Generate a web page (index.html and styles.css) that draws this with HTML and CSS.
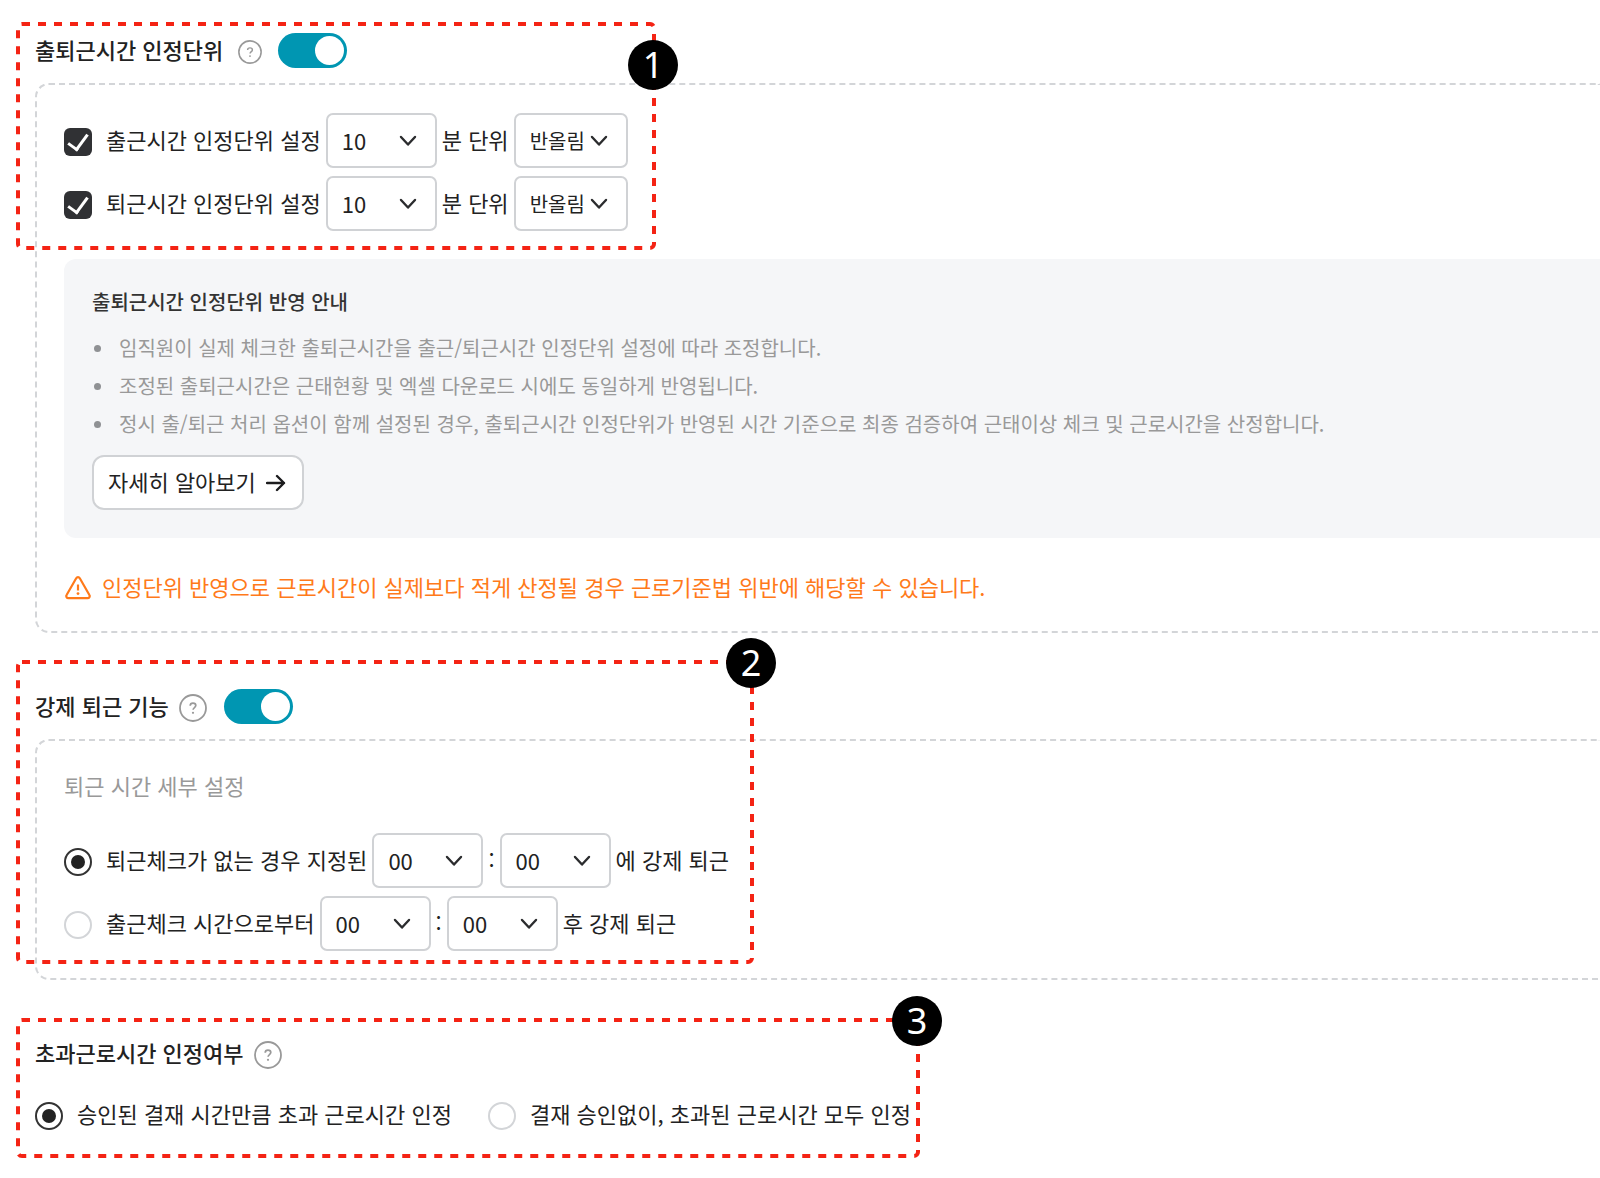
FILE: index.html
```html
<!DOCTYPE html>
<html lang="ko">
<head>
    <meta charset="UTF-8">
    <meta name="viewport" content="width=device-width, initial-scale=1.0">
    <title>근태 설정</title>
    <link rel="stylesheet" href="styles.css">
</head>
<body>
    <svg class="symbols" aria-hidden="true">
        <symbol id="chevron" viewBox="0 0 18 12">
            <path d="M2 2l7 7.5L16 2" fill="none" stroke="#2b2c2e" stroke-width="2.4" stroke-linecap="round" stroke-linejoin="round"/>
        </symbol>
        <symbol id="help" viewBox="0 0 28 28">
            <circle cx="14" cy="14" r="13" fill="none" stroke="#999" stroke-width="1.8"/>
            <path d="M11.2 11.7c0-1.6 1.2-2.5 2.8-2.5s2.8 1 2.8 2.4c0 2-2.7 2-2.7 4.2" fill="none" stroke="#999" stroke-width="1.7"/>
            <circle cx="14" cy="18.8" r="1.1" fill="#999"/>
        </symbol>
    </svg>

    <form>
        <section class="section">
            <div class="section-header">
                <h2>출퇴근시간 인정단위</h2>
                <button type="button" class="help help-small" aria-label="도움말"><svg><use href="#help"/></svg></button>
                <input type="checkbox" class="toggle" aria-label="출퇴근시간 인정단위" checked>
            </div>
            <div class="panel">
                <div class="rows">
                    <div class="row">
                        <input type="checkbox" class="check" id="inUnit" checked>
                        <label for="inUnit">출근시간 인정단위 설정</label>
                        <span class="select">
                            <select aria-label="출근 분"><option>10</option></select>
                            <svg><use href="#chevron"/></svg>
                        </span>
                        <span class="unit">분 단위</span>
                        <span class="select select-text">
                            <select aria-label="출근 처리"><option>반올림</option></select>
                            <svg><use href="#chevron"/></svg>
                        </span>
                    </div>
                    <div class="row">
                        <input type="checkbox" class="check" id="outUnit" checked>
                        <label for="outUnit">퇴근시간 인정단위 설정</label>
                        <span class="select">
                            <select aria-label="퇴근 분"><option>10</option></select>
                            <svg><use href="#chevron"/></svg>
                        </span>
                        <span class="unit">분 단위</span>
                        <span class="select select-text">
                            <select aria-label="퇴근 처리"><option>반올림</option></select>
                            <svg><use href="#chevron"/></svg>
                        </span>
                    </div>
                </div>
                <div class="notice">
                    <h3>출퇴근시간 인정단위 반영 안내</h3>
                    <ul>
                        <li>임직원이 실제 체크한 출퇴근시간을 출근/퇴근시간 인정단위 설정에 따라 조정합니다.</li>
                        <li>조정된 출퇴근시간은 근태현황 및 엑셀 다운로드 시에도 동일하게 반영됩니다.</li>
                        <li>정시 출/퇴근 처리 옵션이 함께 설정된 경우, 출퇴근시간 인정단위가 반영된 시간 기준으로 최종 검증하여 근태이상 체크 및 근로시간을 산정합니다.</li>
                    </ul>
                    <button type="button" class="more">
                        <span>자세히 알아보기</span>
                        <svg viewBox="0 0 20 18"><path d="M1 9h17M11 2l7 7-7 7" fill="none" stroke="#1c1c1e" stroke-width="2.4" stroke-linecap="round" stroke-linejoin="round"/></svg>
                    </button>
                </div>
                <p class="warning">
                    <svg viewBox="0 0 26 24"><path d="M11.2 2.2a2.1 2.1 0 0 1 3.6 0l9.6 16.8a2.1 2.1 0 0 1-1.8 3.2H3.4a2.1 2.1 0 0 1-1.8-3.2z" fill="none" stroke="#ff7a1a" stroke-width="2.2" stroke-linejoin="round"/><path d="M13 8.5v6" stroke="#ff7a1a" stroke-width="2.2"/><circle cx="13" cy="17.6" r="1.4" fill="#ff7a1a"/></svg>
                    <span>인정단위 반영으로 근로시간이 실제보다 적게 산정될 경우 근로기준법 위반에 해당할 수 있습니다.</span>
                </p>
            </div>
            <div class="callout callout-1">
                <svg><rect x="2" y="2" rx="4"/></svg>
                <span class="badge">1</span>
            </div>
        </section>

        <section class="section">
            <div class="section-header">
                <h2>강제 퇴근 기능</h2>
                <button type="button" class="help" aria-label="도움말"><svg><use href="#help"/></svg></button>
                <input type="checkbox" class="toggle" aria-label="강제 퇴근 기능" checked>
            </div>
            <div class="panel">
                <p class="subtitle">퇴근 시간 세부 설정</p>
                <div class="rows">
                    <div class="row">
                        <input type="radio" name="forceOut" class="radio" id="forceFixed" checked>
                        <label for="forceFixed">퇴근체크가 없는 경우 지정된</label>
                        <span class="select">
                            <select aria-label="지정 시"><option>00</option></select>
                            <svg><use href="#chevron"/></svg>
                        </span>
                        <span class="unit">:</span>
                        <span class="select">
                            <select aria-label="지정 분"><option>00</option></select>
                            <svg><use href="#chevron"/></svg>
                        </span>
                        <span class="unit">에 강제 퇴근</span>
                    </div>
                    <div class="row">
                        <input type="radio" name="forceOut" class="radio" id="forceAfter">
                        <label for="forceAfter">출근체크 시간으로부터</label>
                        <span class="select">
                            <select aria-label="경과 시간"><option>00</option></select>
                            <svg><use href="#chevron"/></svg>
                        </span>
                        <span class="unit">:</span>
                        <span class="select">
                            <select aria-label="경과 분"><option>00</option></select>
                            <svg><use href="#chevron"/></svg>
                        </span>
                        <span class="unit">후 강제 퇴근</span>
                    </div>
                </div>
            </div>
            <div class="callout callout-2">
                <svg><rect x="2" y="2" rx="4"/></svg>
                <span class="badge">2</span>
            </div>
        </section>

        <section class="section">
            <div class="section-header">
                <h2>초과근로시간 인정여부</h2>
                <button type="button" class="help" aria-label="도움말"><svg><use href="#help"/></svg></button>
            </div>
            <div class="options">
                <div class="option">
                    <input type="radio" name="overtime" class="radio" id="approved" checked>
                    <label for="approved">승인된 결재 시간만큼 초과 근로시간 인정</label>
                </div>
                <div class="option">
                    <input type="radio" name="overtime" class="radio" id="all">
                    <label for="all">결재 승인없이, 초과된 근로시간 모두 인정</label>
                </div>
            </div>
            <div class="callout callout-3">
                <svg><rect x="2" y="2" rx="4"/></svg>
                <span class="badge">3</span>
            </div>
        </section>
    </form>
</body>
</html>
```
FILE: styles.css
```css
* {
    box-sizing: border-box;
}
body {
    font-family: "Noto Sans CJK KR", sans-serif;
    font-size: 22px;
    line-height: 32px;
    color: #222;
    background: white;
    margin: 0;
    padding: 33px 0 48px 35px;
}
h2, h3, p, ul {
    margin: 0;
    padding: 0;
}
input, select, button {
    font: inherit;
    color: inherit;
    margin: 0;
}
svg {
    display: block;
}
.symbols {
    position: absolute;
    width: 0;
    height: 0;
}

/* sections */
.section {
    position: relative;
    margin-bottom: 56px;
}
.section:last-child {
    margin-bottom: 0;
}
.section-header {
    display: flex;
    align-items: center;
    height: 35px;
    margin-bottom: 15px;
}
h2 {
    font-size: 22px;
    font-weight: 500;
}
/* the font sits low in its line box */
h2, label, .unit, .more span, .warning span {
    padding-bottom: 3px;
}
.help {
    width: 28px;
    height: 28px;
    margin: 3px 17px 0 10px;
    padding: 0;
    border: none;
    background: none;
}
.help svg {
    width: 100%;
    height: 100%;
}
.help-small {
    width: 24px;
    height: 24px;
    margin: 3px 16px 0 15px;
}
.panel {
    border: 2px dashed #d3d5d8;
    border-right: none;
    border-radius: 14px 0 0 14px;
    padding: 28px 0 27px 27px;
}
.rows {
    display: flex;
    flex-direction: column;
    gap: 8px;
}
.row {
    display: flex;
    align-items: center;
    gap: 5px;
}
.row label, .option label {
    margin-left: 9px;
}

/* controls */
.toggle {
    appearance: none;
    display: flex;
    align-items: center;
    width: 69px;
    height: 35px;
    padding: 3px;
    border-radius: 18px;
    background: #ccc;
}
.toggle::before {
    content: "";
    width: 29px;
    height: 29px;
    border-radius: 50%;
    background: white;
}
.toggle:checked {
    justify-content: flex-end;
    background: #0096b2;
}
.check {
    appearance: none;
    display: grid;
    place-items: center;
    width: 28px;
    height: 28px;
    margin-top: 3px;
    border-radius: 6px;
    background: #303134;
}
.check:checked::before {
    content: "";
    width: 9px;
    height: 17px;
    margin-bottom: 4px;
    border: solid white;
    border-width: 0 3px 3px 0;
    transform: rotate(36deg);
}
.radio {
    appearance: none;
    display: grid;
    place-items: center;
    width: 28px;
    height: 28px;
    margin-top: 3px;
    border: 2px solid #d3d5d8;
    border-radius: 50%;
    background: white;
}
.radio:checked {
    border-color: #333;
}
.radio:checked::before {
    content: "";
    width: 14px;
    height: 14px;
    border-radius: 50%;
    background: #222;
}
.select {
    position: relative;
}
.select select {
    appearance: none;
    display: block;
    width: 111px;
    height: 55px;
    padding: 0 14px 2px;
    border: 2px solid #d0d2d5;
    border-radius: 7px;
    background: white;
}
.select svg {
    position: absolute;
    top: 22px;
    right: 20px;
    width: 18px;
    height: 12px;
    pointer-events: none;
}
.select-text select {
    width: 114px;
    padding-bottom: 0;
    font-size: 20px;
}

/* notice box */
.notice {
    margin-top: 28px;
    padding: 28px;
    border-radius: 12px 0 0 12px;
    background: #f5f6f8;
    font-size: 20px;
}
h3 {
    font-size: 20px;
    font-weight: 500;
    line-height: 30px;
    color: #333;
}
ul {
    margin: 12px 0;
    list-style: none;
    color: #999;
}
li {
    display: flex;
    align-items: center;
    line-height: 38px;
}
li::before {
    content: "";
    width: 7px;
    height: 7px;
    margin: 0 18px 0 2px;
    border-radius: 50%;
    background: #8f9194;
}
.more {
    display: flex;
    align-items: center;
    gap: 10px;
    height: 55px;
    padding: 0 16px 0 14px;
    border: 2px solid #d0d2d5;
    border-radius: 12px;
    background: white;
    font-size: 22px;
}
.more svg {
    width: 20px;
    height: 18px;
}
.warning {
    display: flex;
    align-items: center;
    gap: 11px;
    height: 33px;
    margin-top: 33px;
    color: #ff7a1a;
}
.warning svg {
    width: 26px;
    height: 24px;
    margin-left: 1px;
}
.subtitle {
    margin-bottom: 32px;
    line-height: 32px;
    color: #999;
}
.options {
    display: flex;
    gap: 36px;
    margin-top: 26px;
}
.option {
    display: flex;
    align-items: center;
    gap: 5px;
}

/* numbered callouts drawn over the sections */
.callout {
    position: absolute;
    left: -19px;
    pointer-events: none;
}
.callout svg {
    width: 100%;
    height: 100%;
}
.callout rect {
    width: calc(100% - 4px);
    height: calc(100% - 4px);
    fill: none;
    stroke: #f42314;
    stroke-width: 4px;
    stroke-dasharray: 8 8;
}
.callout-1 {
    top: -11px;
    width: 640px;
    height: 228px;
}
.callout-2 {
    top: -29px;
    width: 738px;
    height: 304px;
}
.callout-3 {
    top: -18px;
    width: 904px;
    height: 140px;
}
.badge {
    position: absolute;
    top: -22px;
    right: -22px;
    width: 50px;
    height: 50px;
    border-radius: 50%;
    background: black;
    color: white;
    font-family: "Noto Sans", sans-serif;
    font-size: 36px;
    line-height: 50px;
    text-align: center;
}
.callout-1 .badge {
    top: 18px;
}
```
